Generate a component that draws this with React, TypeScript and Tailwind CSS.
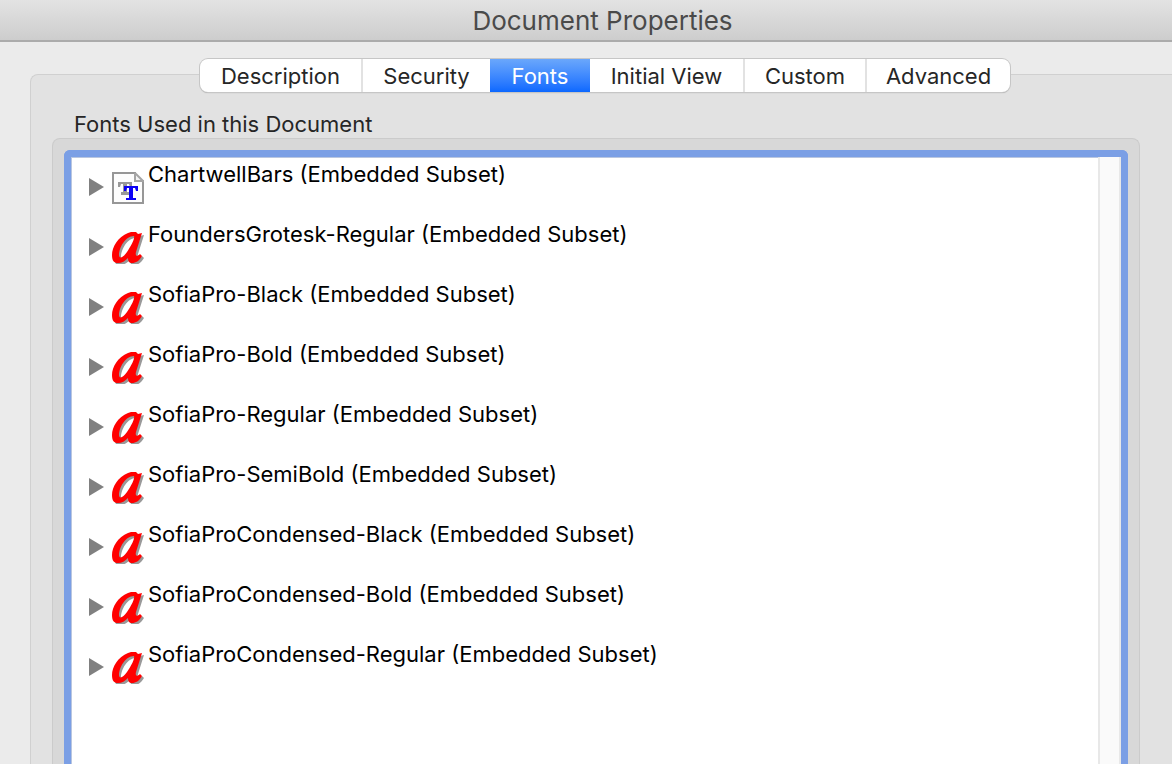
import { useState } from 'react'
import clsx from 'clsx'

type FontEntry = {
    name: string
    kind: 'truetype' | 'type1'
}

const tabs = [
    { label: 'Description', width: 'w-[163px]' },
    { label: 'Security', width: 'w-[127px]' },
    { label: 'Fonts', width: 'w-[100px]' },
    { label: 'Initial View', width: 'w-[155px]' },
    { label: 'Custom', width: 'w-[122px]' },
    { label: 'Advanced', width: 'w-[143px]' },
]

const fonts: FontEntry[] = [
    { name: 'ChartwellBars', kind: 'truetype' },
    { name: 'FoundersGrotesk-Regular', kind: 'type1' },
    { name: 'SofiaPro-Black', kind: 'type1' },
    { name: 'SofiaPro-Bold', kind: 'type1' },
    { name: 'SofiaPro-Regular', kind: 'type1' },
    { name: 'SofiaPro-SemiBold', kind: 'type1' },
    { name: 'SofiaProCondensed-Black', kind: 'type1' },
    { name: 'SofiaProCondensed-Bold', kind: 'type1' },
    { name: 'SofiaProCondensed-Regular', kind: 'type1' },
]

const TrueTypeIcon = () => (
    <svg viewBox="0 0 32 32" className="size-8" aria-hidden="true">
        <path d="M1 1H24L31 8V31H1Z" fill="#fdfdfd" />
        <path
            d="M24 1H1V31H31V8"
            fill="none"
            stroke="#979797"
            strokeWidth="2"
        />
        <path
            d="M23 1V9H31L23 1"
            fill="#f4f4f4"
            stroke="#a5a5a5"
            strokeWidth="2"
        />
        <path
            d="M6 10H20V15H18L17 12H15V20H17V23H9V20H11V12H9L8 15H6Z"
            fill="#999999"
        />
        <path
            d="M12 14H26V19H24L23 16H21V26H24V28H14V26H17V16H15L14 19H12Z"
            fill="#0b00f5"
        />
    </svg>
)

const scriptShape =
    'M16 1L19 0H24L26 2L30 1L24 20C23 24 25 25 28 22L30 24C27 29 24 31 20 31C17 31 16 29 16 26C13 29 10 31 6 31C2 31 0 29 0 23C0 15 6 5 16 1ZM22 4C13 4 7 16 7 23C7 27 11 26 15 20C19 14 23 7 22 4Z'

// red script mark over its own grey shadow
const Type1Icon = () => (
    <svg viewBox="0 0 32 32" className="size-8" aria-hidden="true">
        <path
            d={scriptShape}
            fill="#999999"
            fillRule="evenodd"
            transform="translate(2 2)"
        />
        <path d={scriptShape} fill="#ff0000" fillRule="evenodd" />
    </svg>
)

const FontRow = ({ font }: { font: FontEntry }) => (
    <li className="flex h-[60px] items-start">
        <button
            type="button"
            aria-label={`Expand ${font.name}`}
            className="mt-[19px] mr-2"
        >
            <svg
                viewBox="0 0 15 18"
                className="block h-[18px] w-[15px]"
                aria-hidden="true"
            >
                <path d="M0 0L15 9L0 18Z" fill="#808080" />
            </svg>
        </button>
        <span className="mt-[13px] mr-1">
            {font.kind === 'truetype' ? <TrueTypeIcon /> : <Type1Icon />}
        </span>
        <span className="text-[22px] leading-[30px] whitespace-nowrap text-black">
            {font.name} (Embedded Subset)
        </span>
    </li>
)

const App = () => {
    const [activeTab, setActiveTab] = useState('Fonts')

    return (
        <div className="flex min-h-screen flex-col bg-[#ebebeb] font-['Inter',sans-serif] text-[#262626]">
            <header className="flex h-[42px] items-center justify-center border-b-2 border-[#ababab] bg-linear-to-b from-[#e3e3e3] to-[#cdcdcd] pt-[2px] pl-[33px]">
                <h1 className="text-[26px] leading-[30px] text-[#4a4a4a]">
                    Document Properties
                </h1>
            </header>

            <main className="flex flex-1 flex-col pt-[17px] pl-[30px]">
                <div
                    role="tablist"
                    className="z-10 -mb-[18px] ml-[170px] flex h-[33px] self-start rounded-lg bg-white shadow-[0_0_0_1px_#c6c6c6,0_1px_1px_0_#a0a0a0]"
                >
                    {tabs.map(tab => (
                        <button
                            key={tab.label}
                            type="button"
                            role="tab"
                            aria-selected={tab.label === activeTab}
                            onClick={() => setActiveTab(tab.label)}
                            className={clsx(
                                'text-[22px] leading-[34px]',
                                tab.width,
                                tab.label === activeTab
                                    ? 'bg-linear-to-b from-[#6aa7fb] to-[#0a68ff] text-white'
                                    : 'border-r-2 border-[#e2e2e2] last:border-r-0 has-[+[aria-selected=true]]:border-r-0',
                            )}
                        >
                            {tab.label}
                        </button>
                    ))}
                </div>

                <section className="flex flex-1 flex-col rounded-tl-lg border-t border-l border-[#d0d0d0] bg-[#e2e2e2] pt-9 pr-8 pl-[21px]">
                    <h2 className="pl-[22px] text-[22px] leading-[27px]">
                        Fonts Used in this Document
                    </h2>
                    <div className="flex flex-1 flex-col rounded-t-lg border border-b-0 border-[#cbcbcb] bg-[#d8d8d8] px-[11px] pt-[11px]">
                        <div className="flex flex-1 rounded-t-md border-7 border-b-0 border-[#7b9fe5] bg-white shadow-[inset_1px_1px_0_#b9c6e0]">
                            <ul className="min-w-0 flex-1 pt-[2px] pl-[18px]">
                                {fonts.map(font => (
                                    <FontRow key={font.name} font={font} />
                                ))}
                            </ul>
                            <div className="w-[23px] border-x-2 border-[#e8e8e8] bg-[#fafafa]" />
                        </div>
                    </div>
                </section>
            </main>
        </div>
    )
}

export default App
